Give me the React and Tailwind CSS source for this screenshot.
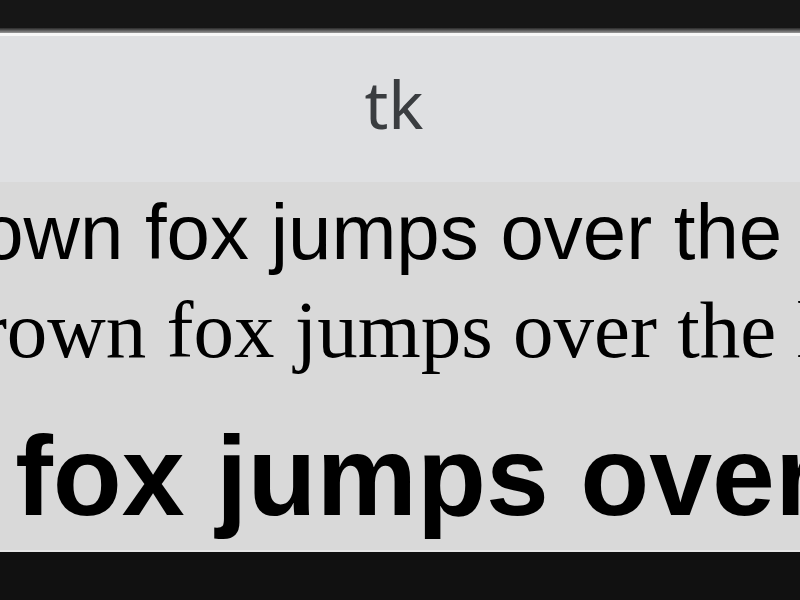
export default function App() {
  const sentence = "The quick brown fox jumps over the lazy dog";
  return (
    <div className="w-[800px] h-[600px] overflow-hidden bg-[#111111] flex flex-col">
      <div className="h-[28px] bg-[#161616]" />
      <div className="h-[5px] bg-gradient-to-b from-[#2a2a2a] to-[#9a9a9a]" />
      <div className="h-[3px] bg-[#f7f7f7]" />
      <div
        className="h-[146px] bg-[#dfe0e2] flex justify-center pr-[12px] text-[66px] leading-[134px] text-[#3a3d40]"
        style={{ fontFamily: '"Noto Sans", sans-serif' }}
      >
        tk
      </div>
      <div className="h-[368px] bg-[#d9d9d9] flex flex-col overflow-hidden text-black">
        <div
          className="h-[100px] flex whitespace-nowrap text-[78px] leading-[100px]"
          style={{ fontFamily: '"Liberation Sans", Arial, sans-serif' }}
        >
          <span className="shrink-0 ml-[-449px]">{sentence}</span>
        </div>
        <div
          className="h-[97px] flex whitespace-nowrap text-[81px] leading-[97px]"
          style={{ fontFamily: '"Liberation Serif", "Times New Roman", serif' }}
        >
          <span className="shrink-0 ml-[-407px]">{sentence}</span>
        </div>
        <div
          className="h-[171px] flex whitespace-nowrap text-[113px] leading-[194px] font-bold"
          style={{ fontFamily: '"Liberation Sans", Arial, sans-serif' }}
        >
          <span className="shrink-0 ml-[-914px]">{sentence}</span>
        </div>
      </div>
      <div className="h-[2px] bg-[#e6e6e6]" />
      <div className="flex-1 bg-[#111111]" />
    </div>
  );
}
